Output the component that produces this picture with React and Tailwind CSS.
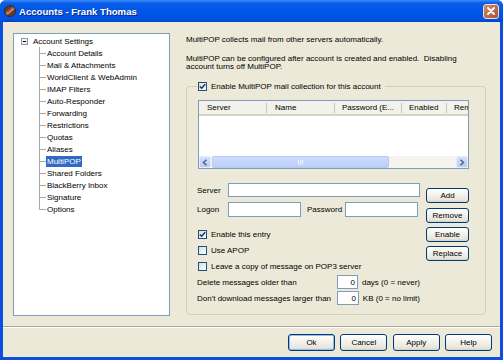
import React from "react";
import clsx from "clsx";

const treeItems = [
  "Account Details",
  "Mail & Attachments",
  "WorldClient & WebAdmin",
  "IMAP Filters",
  "Auto-Responder",
  "Forwarding",
  "Restrictions",
  "Quotas",
  "Aliases",
  "MultiPOP",
  "Shared Folders",
  "BlackBerry Inbox",
  "Signature",
  "Options",
];

function CheckBox({ checked }) {
  return (
    <span className="w-[9px] h-[9px] shrink-0 border border-[#1c5180] bg-[linear-gradient(135deg,#dcdcd7,#ffffff)] flex items-center justify-center">
      {checked && (
        <svg width="7" height="7" viewBox="0 0 7 7">
          <path d="M0.8 3.4 L2.7 5.3 L6.2 1.3" fill="none" stroke="#1d2f55" strokeWidth="1.4" />
        </svg>
      )}
    </span>
  );
}

function XpButton({ children, className, isDefault }) {
  return (
    <div
      className={clsx(
        "flex items-center justify-center border border-[#003c74] rounded-[3px] bg-[linear-gradient(to_bottom,#ffffff_0%,#f4f3ee_40%,#e8e5da_85%,#d6d0c5_100%)]",
        isDefault && "shadow-[inset_0_0_0_1px_#98b8ee]",
        className
      )}
    >
      {children}
    </div>
  );
}

function Field({ className, children }) {
  return (
    <div className={clsx("h-[14px] border border-[#7f9db9] bg-white", className)}>{children}</div>
  );
}

function Arrow({ dir }) {
  return (
    <div className="w-[12px] h-[12px] rounded-[2px] border border-[#e6ecfb] bg-[linear-gradient(to_bottom,#d3e0fd,#b8cbf6)] flex items-center justify-center">
      <svg width="6" height="7" viewBox="0 0 6 7">
        <path
          d={dir === "left" ? "M4.5 0.8 L1.5 3.5 L4.5 6.2" : "M1.5 0.8 L4.5 3.5 L1.5 6.2"}
          fill="none"
          stroke="#4d6185"
          strokeWidth="1.5"
        />
      </svg>
    </div>
  );
}

function TitleBar() {
  return (
    <div className="h-[22px] flex items-center pl-[4px] pr-[4px] bg-[linear-gradient(to_bottom,#3a8cff_0%,#0a5ee8_14%,#0057e6_50%,#0052e0_85%,#0043cf_100%)]">
      <svg width="12" height="12" viewBox="0 0 12 12">
        <circle cx="6" cy="6" r="5.5" fill="#6a3a26" stroke="#3b1f12" strokeWidth="0.8" />
        <rect x="1.5" y="4.6" width="9" height="2.8" fill="#c99070" transform="rotate(-40 6 6)" />
        <path d="M3.2 7.6 L8.6 3.2" stroke="#4a2716" strokeWidth="0.7" />
      </svg>
      <span className="ml-[3px] text-white font-bold text-[9.6px] [text-shadow:1px_1px_0_#0b2a8f]">
        Accounts - Frank Thomas
      </span>
      <div className="ml-auto w-[16px] h-[15px] rounded-[3px] border border-[#f2ddd3] bg-[linear-gradient(135deg,#d2896a,#a5553a)] flex items-center justify-center">
        <svg width="10" height="10" viewBox="0 0 10 10">
          <path d="M2 2 L8 8 M8 2 L2 8" stroke="#fff" strokeWidth="1.8" strokeLinecap="round" />
        </svg>
      </div>
    </div>
  );
}

function Tree() {
  return (
    <div className="w-[157px] h-[283px] shrink-0 border border-[#7f9db9] bg-white pt-[1px]">
      <div className="h-[12px] flex items-center">
        <svg className="ml-[7px]" width="7" height="7" viewBox="0 0 7 7">
          <rect x="0.5" y="0.5" width="6" height="6" fill="#f4f4f0" stroke="#8c9aa5" />
          <path d="M2 3.5 H5" stroke="#000" />
        </svg>
        <span className="ml-[5px]">Account Settings</span>
      </div>
      {treeItems.map((item, i) => {
        const last = i === treeItems.length - 1;
        const selected = item === "MultiPOP";
        return (
          <div key={item} className="h-[12px] flex items-center">
            <svg className="ml-[25px] shrink-0" width="7" height="12" viewBox="0 0 7 12">
              <path d={last ? "M0.5 0 V6.5 H7" : "M0.5 0 V12 M0.5 6.5 H7"} fill="none" stroke="#a8a8a8" />
            </svg>
            <span
              className={clsx(
                "px-[1px] h-[11px] leading-[11px]",
                selected && "bg-[#316ac5] text-white"
              )}
            >
              {item}
            </span>
          </div>
        );
      })}
    </div>
  );
}

function ListView() {
  return (
    <div className="ml-[1px] mt-[9px] w-[271px] h-[69px] border border-[#7f9db9] bg-white flex flex-col overflow-hidden">
      <div className="h-[15px] shrink-0 flex items-center bg-[#f3f2ea] border-b-2 border-[#d8d4c4] whitespace-nowrap">
        <div className="w-[67px] shrink-0 pl-[8px]">Server</div>
        <div className="w-px h-[10px] bg-[#c9c6b4] shrink-0" />
        <div className="w-[67px] shrink-0 pl-[8px]">Name</div>
        <div className="w-px h-[10px] bg-[#c9c6b4] shrink-0" />
        <div className="w-[66px] shrink-0 pl-[7px]">Password (E...</div>
        <div className="w-px h-[10px] bg-[#c9c6b4] shrink-0" />
        <div className="w-[44px] shrink-0 pl-[7px]">Enabled</div>
        <div className="w-px h-[10px] bg-[#c9c6b4] shrink-0" />
        <div className="shrink-0 pl-[7px]">Remove</div>
      </div>
      <div className="flex-1" />
      <div className="h-[12px] shrink-0 flex bg-[#f4f3ee]">
        <Arrow dir="left" />
        <div className="ml-[1px] w-[177px] h-[12px] rounded-[2px] border border-[#b6c9f4] bg-[linear-gradient(to_bottom,#cddbfd,#bccff8)] flex items-center justify-center">
          <svg width="6" height="5" viewBox="0 0 6 5">
            <path d="M0.5 0 V5 M2.5 0 V5 M4.5 0 V5" stroke="#eef3ff" />
          </svg>
        </div>
        <div className="flex-1" />
        <Arrow dir="right" />
      </div>
    </div>
  );
}

function CheckRow({ checked, children }) {
  return (
    <div className="h-[16px] flex items-center ml-[1px] gap-[4px]">
      <CheckBox checked={checked} />
      <span>{children}</span>
    </div>
  );
}

export default function App() {
  return (
    <div className="w-[503px] h-[360px] flex flex-col bg-[#0c4fe0] rounded-t-[6px] overflow-hidden font-['Liberation_Sans',Arial,sans-serif] text-[8px] leading-[9px] text-black">
      <TitleBar />
      <div className="flex-1 mx-[3px] mb-[3px] bg-[#ece9d8] flex flex-col">
        <div className="flex items-start pt-[11px] pl-[10px]">
          <Tree />
          <div className="ml-[16px] w-[300px] pt-[2px]">
            <p className="leading-[9px]">MultiPOP collects mail from other servers automatically.</p>
            <p className="mt-[11px] leading-[8px] whitespace-pre">
              {"MultiPOP can be configured after account is created and enabled.  Disabling"}
              <br />
              {"account turns off MultiPOP."}
            </p>
            <fieldset className="mt-[10px] border border-[#d0d0bf] rounded-[4px] pl-[10px] pr-[16px] pb-[9px]">
              <legend className="flex items-center gap-[4px] pl-[1px] pr-[4px] h-[10px]">
                <CheckBox checked />
                <span>Enable MultiPOP mail collection for this account</span>
              </legend>
              <ListView />
              <div className="mt-[14px] flex">
                <div className="w-[223px]">
                  <div className="h-[14px] flex items-center">
                    <span className="w-[31px] shrink-0">Server</span>
                    <Field className="flex-1" />
                  </div>
                  <div className="mt-[5px] h-[15px] flex items-center">
                    <span className="w-[31px] shrink-0">Logon</span>
                    <Field className="w-[73px] h-[15px]" />
                    <span className="ml-[6px] w-[38px] shrink-0">Password</span>
                    <Field className="w-[73px] h-[15px]" />
                  </div>
                  <div className="mt-[9px]">
                    <CheckRow checked>Enable this entry</CheckRow>
                    <CheckRow>Use APOP</CheckRow>
                    <CheckRow>Leave a copy of message on POP3 server</CheckRow>
                  </div>
                  <div className="mt-[1px] h-[14px] flex items-center">
                    <span className="w-[140px] shrink-0">Delete messages older than</span>
                    <Field className="w-[29px] flex items-center justify-end pr-[2px]">0</Field>
                    <span className="ml-[4px] whitespace-nowrap">days (0 = never)</span>
                  </div>
                  <div className="mt-[2px] h-[14px] flex items-center">
                    <span className="w-[140px] shrink-0">Don't download messages larger than</span>
                    <Field className="w-[29px] flex items-center justify-end pr-[2px]">0</Field>
                    <span className="ml-[4px] whitespace-nowrap">KB (0 = no limit)</span>
                  </div>
                </div>
                <div className="ml-[6px] w-[43px] pt-[5px]">
                  <XpButton className="h-[15px]">Add</XpButton>
                  <XpButton className="h-[15px] mt-[5px]">Remove</XpButton>
                  <XpButton className="h-[15px] mt-[4px]">Enable</XpButton>
                  <XpButton className="h-[15px] mt-[4px]">Replace</XpButton>
                </div>
              </div>
            </fieldset>
          </div>
        </div>
        <div className="mt-[10px] border-t border-[#aca899] border-b border-b-white" />
        <div className="mt-[6px] flex justify-end gap-[5.33px] pr-[8px]">
          <XpButton isDefault className="w-[47px] h-[17px]">Ok</XpButton>
          <XpButton className="w-[47px] h-[17px]">Cancel</XpButton>
          <XpButton className="w-[47px] h-[17px]">Apply</XpButton>
          <XpButton className="w-[47px] h-[17px]">Help</XpButton>
        </div>
      </div>
    </div>
  );
}
